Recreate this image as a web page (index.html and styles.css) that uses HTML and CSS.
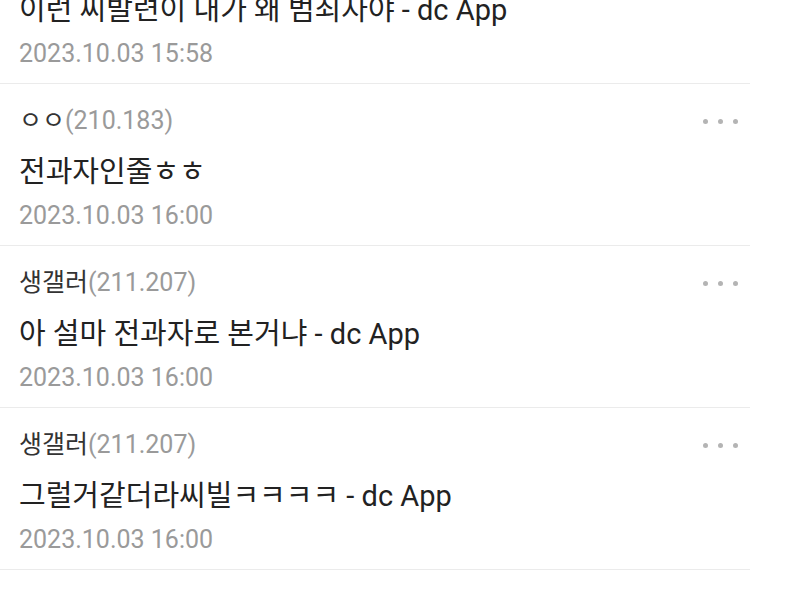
FILE: index.html
```html
<!DOCTYPE html>
<html>
<head>
    <meta charset="UTF-8">
    <title>댓글</title>
    <link rel="stylesheet" href="styles.css">
</head>
<body>
    <ul class="commentList">
        <li class="comment">
            <div class="commentHead">
                <span class="nick">ㅇㅇ<span class="ip">(118.235)</span></span>
                <span class="more"><i></i><i></i><i></i></span>
            </div>
            <p class="commentText">이런 씨발련이 내가 왜 범죄자야 - dc App</p>
            <div class="commentDate">2023.10.03 15:58</div>
        </li>
        <li class="comment">
            <div class="commentHead">
                <span class="nick">ㅇㅇ<span class="ip">(210.183)</span></span>
                <span class="more"><i></i><i></i><i></i></span>
            </div>
            <p class="commentText">전과자인줄ㅎㅎ</p>
            <div class="commentDate">2023.10.03 16:00</div>
        </li>
        <li class="comment">
            <div class="commentHead">
                <span class="nick">생갤러<span class="ip">(211.207)</span></span>
                <span class="more"><i></i><i></i><i></i></span>
            </div>
            <p class="commentText">아 설마 전과자로 본거냐 - dc App</p>
            <div class="commentDate">2023.10.03 16:00</div>
        </li>
        <li class="comment">
            <div class="commentHead">
                <span class="nick">생갤러<span class="ip">(211.207)</span></span>
                <span class="more"><i></i><i></i><i></i></span>
            </div>
            <p class="commentText">그럴거같더라씨빌ㅋㅋㅋㅋ - dc App</p>
            <div class="commentDate">2023.10.03 16:00</div>
        </li>
    </ul>
</body>
</html>
```

FILE: styles.css
```css
body {
    margin: 0;
    padding: 0;
    background-color: #fff;
    font-family: Roboto, "Noto Sans CJK KR", sans-serif;
    color: #222;
    overflow: hidden;
}

.commentList {
    list-style: none;
    margin: -78px 0 0 0;
    padding: 0;
    width: 750px;
}

.comment {
    padding: 22px 12px 14px 19px;
    border-bottom: 1px solid #ebebeb;
}

.commentHead {
    display: flex;
    justify-content: space-between;
    align-items: center;
    height: 30px;
}

.nick {
    font-size: 25px;
    line-height: 30px;
    color: #333;
}

.ip {
    color: #9a9a9a;
}

.more {
    display: flex;
    gap: 10px;
}

.more i {
    width: 5px;
    height: 5px;
    border-radius: 50%;
    background-color: #b4b4b4;
}

.commentText {
    margin: 18px 0 0 0;
    font-size: 29px;
    line-height: 36px;
    color: #222;
}

.commentDate {
    margin-top: 11px;
    font-size: 25px;
    line-height: 30px;
    color: #9a9a9a;
}
```
